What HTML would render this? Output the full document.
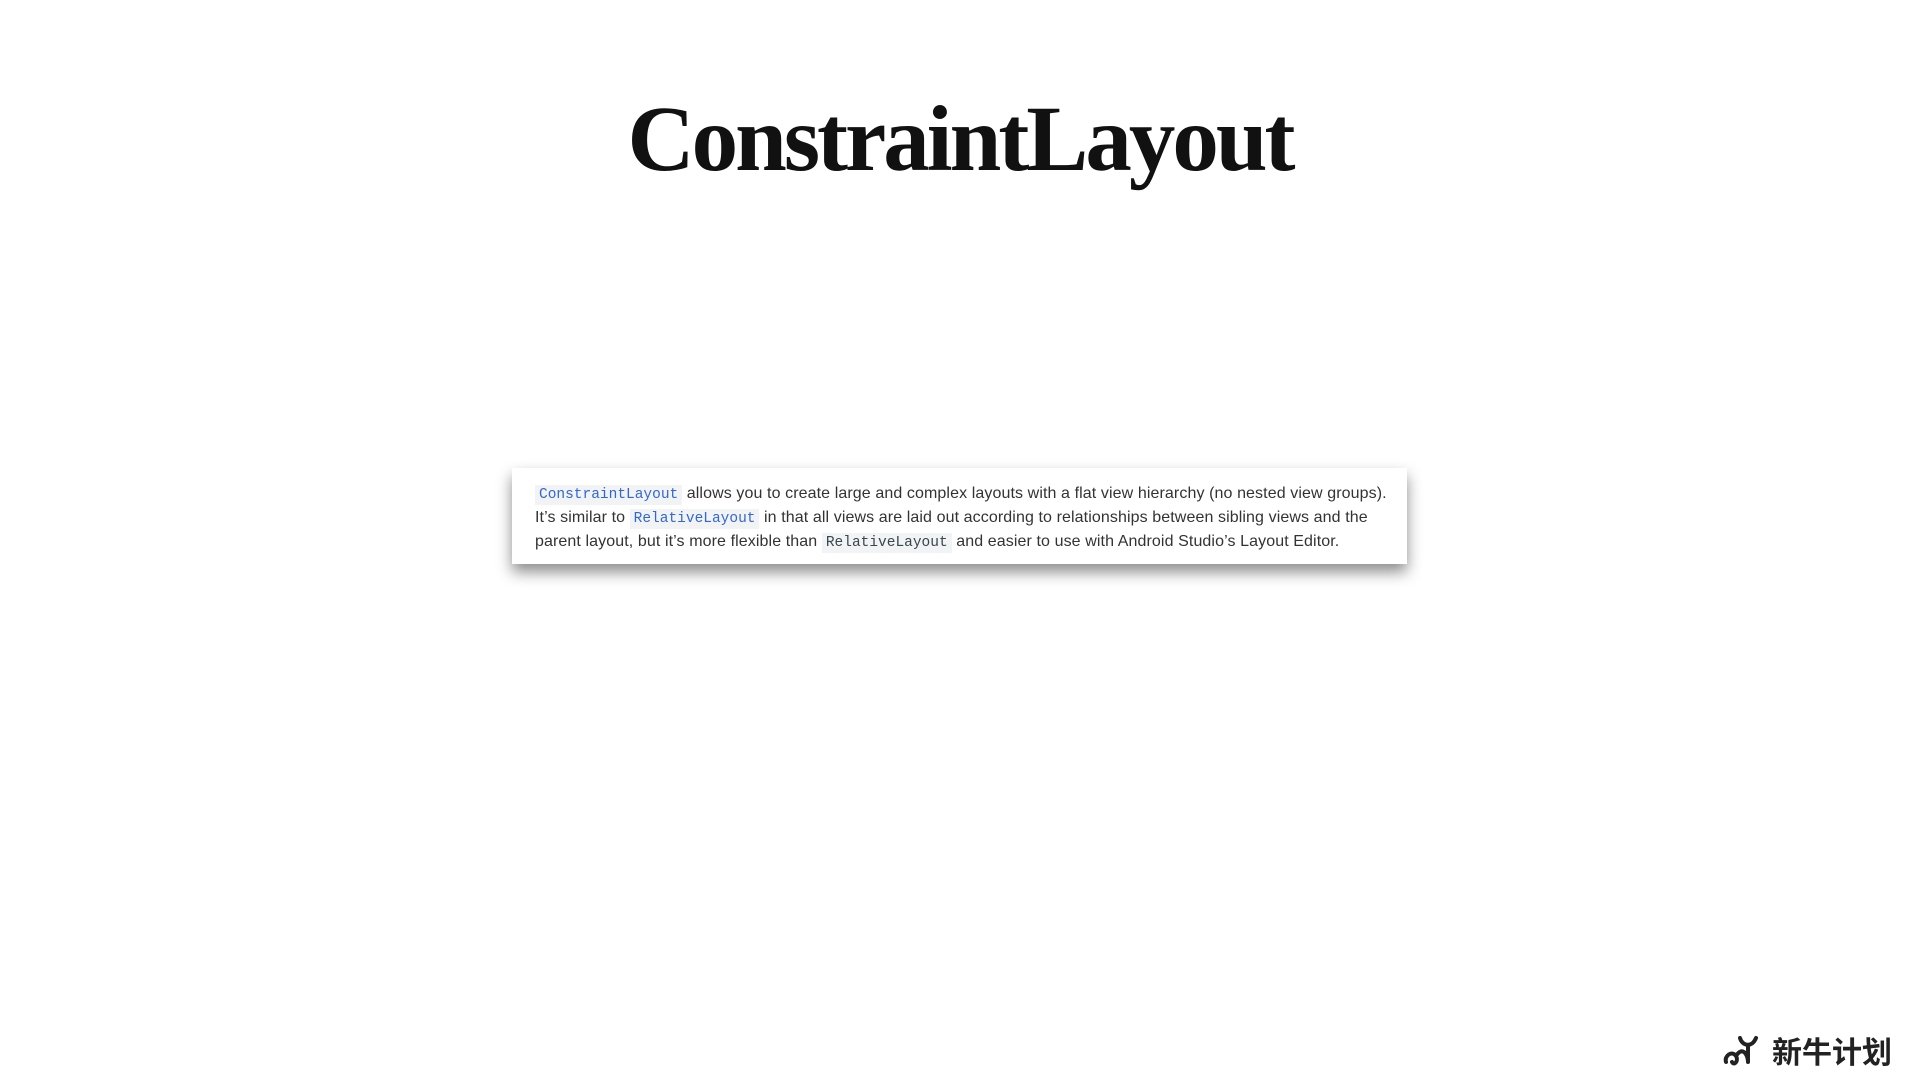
<!DOCTYPE html>
<html><head><meta charset="utf-8"><style>
html,body{margin:0;padding:0;background:#fff;width:1920px;height:1080px;overflow:hidden;position:relative}
h1{position:absolute;top:86px;left:0;width:1920px;text-align:center;margin:0;font-family:"Liberation Serif",serif;font-weight:bold;font-size:93px;letter-spacing:-3px;color:#111}
.box{position:absolute;left:512px;top:468px;width:895px;height:96px;box-sizing:border-box;padding:14px 22px 0 23px;background:#fff;box-shadow:0 8px 14px rgba(0,0,0,.45);font-family:"Liberation Sans",sans-serif;font-size:16px;line-height:24px;color:#333;letter-spacing:0.1px;white-space:nowrap}
code{font-family:"Liberation Mono",monospace;font-size:14.5px;line-height:1;background:#f1f3f4;padding:2px 4px;letter-spacing:0;color:#37474f}
code.b{color:#3367d6}
.logo{position:absolute;left:1722px;top:1028px;font-family:"Noto Sans CJK SC",sans-serif;font-weight:bold;font-size:30px;color:#222;display:flex;align-items:center;gap:8px}
</style></head><body>
<h1>ConstraintLayout</h1>
<div class="box"><code class="b">ConstraintLayout</code> allows you to create large and complex layouts with a flat view hierarchy (no nested view groups).<br>It’s similar to <code class="b">RelativeLayout</code> in that all views are laid out according to relationships between sibling views and the<br>parent layout, but it’s more flexible than <code>RelativeLayout</code> and easier to use with Android Studio’s Layout Editor.</div>
<div class="logo"><svg width="42" height="36" viewBox="0 0 42 36"><path d="M4 30 C2 24 10 18 14 24 C17 29 12 34 10 30 M14 24 C20 14 26 22 26 30 M18 6 C20 14 30 16 34 6 M26 14 L26 30" fill="none" stroke="#222" stroke-width="4" stroke-linecap="round"/></svg><span>新牛计划</span></div>
</body></html>
